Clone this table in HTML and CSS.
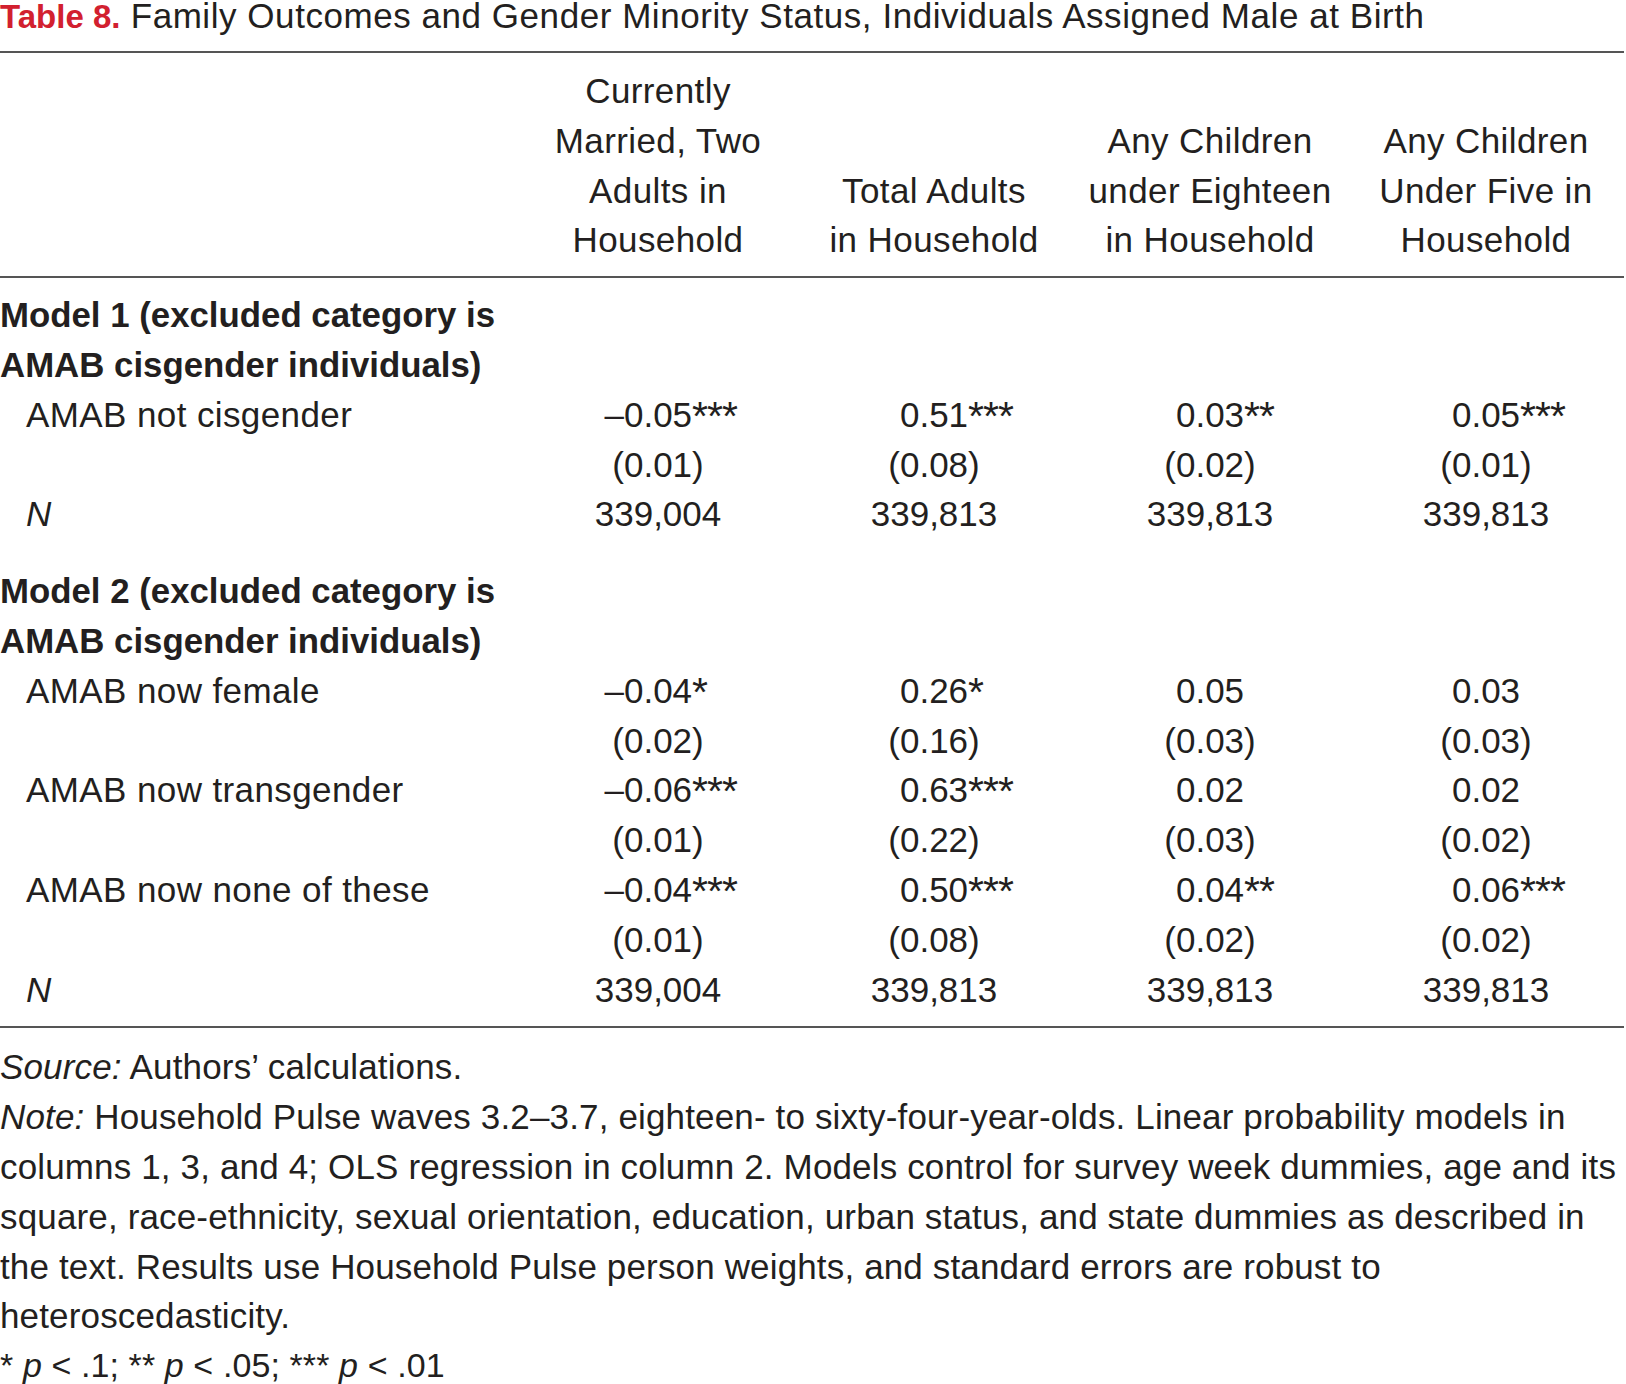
FILE: index.html
```html
<!DOCTYPE html>
<html lang="en">
<head>
<meta charset="utf-8">
<title>Table 8</title>
<link rel="stylesheet" href="styles.css">
</head>
<body>
<div class="page">
  <h1 class="title"><span class="tnum">Table 8.</span> Family Outcomes and Gender Minority Status, Individuals Assigned Male at Birth</h1>
  <table class="tbl">
    <colgroup>
      <col class="c-label"><col class="c-data"><col class="c-data"><col class="c-data"><col class="c-data">
    </colgroup>
    <thead>
      <tr>
        <th></th>
        <th>Currently<br>Married, Two<br>Adults in<br>Household</th>
        <th>Total Adults<br>in Household</th>
        <th>Any Children<br>under Eighteen<br>in Household</th>
        <th>Any Children<br>Under Five in<br>Household</th>
      </tr>
    </thead>
    <tbody class="grp grp1">
      <tr class="first"><td class="model" colspan="5">Model 1 (excluded category is<br>AMAB cisgender individuals)</td></tr>
      <tr>
        <td class="lbl">AMAB not cisgender</td>
        <td class="v"><span class="ghost">(</span><span class="num"><span class="neg">–</span>0.05<span class="sig">***</span></span><span class="ghost">)</span></td>
        <td class="v"><span class="ghost">(</span><span class="num">0.51<span class="sig">***</span></span><span class="ghost">)</span></td>
        <td class="v"><span class="ghost">(</span><span class="num">0.03<span class="sig">**</span></span><span class="ghost">)</span></td>
        <td class="v"><span class="ghost">(</span><span class="num">0.05<span class="sig">***</span></span><span class="ghost">)</span></td>
      </tr>
      <tr>
        <td class="lbl"></td>
        <td class="v">(0.01)</td><td class="v">(0.08)</td><td class="v">(0.02)</td><td class="v">(0.01)</td>
      </tr>
      <tr>
        <td class="lbl"><i>N</i></td>
        <td class="v">339,004</td><td class="v">339,813</td><td class="v">339,813</td><td class="v">339,813</td>
      </tr>
    </tbody>
    <tbody class="grp grp2">
      <tr class="first"><td class="model" colspan="5">Model 2 (excluded category is<br>AMAB cisgender individuals)</td></tr>
      <tr>
        <td class="lbl">AMAB now female</td>
        <td class="v"><span class="ghost">(</span><span class="num"><span class="neg">–</span>0.04<span class="sig">*</span></span><span class="ghost">)</span></td>
        <td class="v"><span class="ghost">(</span><span class="num">0.26<span class="sig">*</span></span><span class="ghost">)</span></td>
        <td class="v"><span class="ghost">(</span><span class="num">0.05</span><span class="ghost">)</span></td>
        <td class="v"><span class="ghost">(</span><span class="num">0.03</span><span class="ghost">)</span></td>
      </tr>
      <tr>
        <td class="lbl"></td>
        <td class="v">(0.02)</td><td class="v">(0.16)</td><td class="v">(0.03)</td><td class="v">(0.03)</td>
      </tr>
      <tr>
        <td class="lbl">AMAB now transgender</td>
        <td class="v"><span class="ghost">(</span><span class="num"><span class="neg">–</span>0.06<span class="sig">***</span></span><span class="ghost">)</span></td>
        <td class="v"><span class="ghost">(</span><span class="num">0.63<span class="sig">***</span></span><span class="ghost">)</span></td>
        <td class="v"><span class="ghost">(</span><span class="num">0.02</span><span class="ghost">)</span></td>
        <td class="v"><span class="ghost">(</span><span class="num">0.02</span><span class="ghost">)</span></td>
      </tr>
      <tr>
        <td class="lbl"></td>
        <td class="v">(0.01)</td><td class="v">(0.22)</td><td class="v">(0.03)</td><td class="v">(0.02)</td>
      </tr>
      <tr>
        <td class="lbl">AMAB now none of these</td>
        <td class="v"><span class="ghost">(</span><span class="num"><span class="neg">–</span>0.04<span class="sig">***</span></span><span class="ghost">)</span></td>
        <td class="v"><span class="ghost">(</span><span class="num">0.50<span class="sig">***</span></span><span class="ghost">)</span></td>
        <td class="v"><span class="ghost">(</span><span class="num">0.04<span class="sig">**</span></span><span class="ghost">)</span></td>
        <td class="v"><span class="ghost">(</span><span class="num">0.06<span class="sig">***</span></span><span class="ghost">)</span></td>
      </tr>
      <tr>
        <td class="lbl"></td>
        <td class="v">(0.01)</td><td class="v">(0.08)</td><td class="v">(0.02)</td><td class="v">(0.02)</td>
      </tr>
      <tr class="last">
        <td class="lbl"><i>N</i></td>
        <td class="v">339,004</td><td class="v">339,813</td><td class="v">339,813</td><td class="v">339,813</td>
      </tr>
    </tbody>
  </table>
  <div class="notes">
    <p><i>Source:</i> Authors’ calculations.</p>
    <p><i>Note:</i> Household Pulse waves 3.2–3.7, eighteen- to sixty-four-year-olds. Linear probability models in<br>columns 1, 3, and 4; OLS regression in column 2. Models control for survey week dummies, age and its<br>square, race-ethnicity, sexual orientation, education, urban status, and state dummies as described in<br>the text. Results use Household Pulse person weights, and standard errors are robust to<br>heteroscedasticity.</p>
    <p class="sigkey">* <i>p</i> &lt; .1; ** <i>p</i> &lt; .05; *** <i>p</i> &lt; .01</p>
  </div>
</div>
</body>
</html>
```

FILE: styles.css
```css
html, body {
  margin: 0;
  padding: 0;
  background: #ffffff;
}

body {
  color: #231f20;
  font-family: "Liberation Sans", Arial, sans-serif;
}

.page {
  width: 1624px;
}

.title {
  margin: 0 0 19px;
  font-size: 35px;
  line-height: 31px;
  font-weight: normal;
  letter-spacing: 0.55px;
  white-space: nowrap;
}

.tnum {
  color: #d2202f;
  font-weight: bold;
  font-size: 33px;
  letter-spacing: 0;
}

.tbl {
  width: 1624px;
  table-layout: fixed;
  border-collapse: collapse;
  border-top: 2px solid #555555;
  border-bottom: 2px solid #555555;
}

.c-label { width: 520px; }
.c-data { width: 276px; }

.tbl th,
.tbl td {
  padding: 0;
  font-size: 35px;
  line-height: 49.8px;
  letter-spacing: 0.4px;
  white-space: nowrap;
}

.tbl thead th {
  font-weight: normal;
  text-align: center;
  vertical-align: bottom;
  padding: 13px 0 11px;
  border-bottom: 2px solid #555555;
}

.grp1 .first td { padding-top: 12px; }
.grp2 .first td { padding-top: 27px; }
.grp2 .last td { padding-bottom: 12px; }

.tbl .model {
  font-weight: bold;
  font-size: 34.8px;
  letter-spacing: 0;
  text-align: left;
}

.tbl .lbl {
  padding-left: 26px;
  text-align: left;
}

.tbl .v {
  text-align: center;
  font-size: 35px;
  letter-spacing: 0;
}

.ghost {
  visibility: hidden;
}

.num {
  position: relative;
}

.neg {
  position: absolute;
  right: 100%;
}

.sig {
  position: absolute;
  left: 100%;
  top: 1px;
  font-size: 41px;
  line-height: 1;
  letter-spacing: -1px;
}

.notes {
  margin-top: 14px;
}

.notes p {
  margin: 0;
  font-size: 35px;
  line-height: 49.8px;
  letter-spacing: 0.15px;
  white-space: nowrap;
}

.notes .sigkey {
  font-size: 34px;
  letter-spacing: 0.1px;
}
```
